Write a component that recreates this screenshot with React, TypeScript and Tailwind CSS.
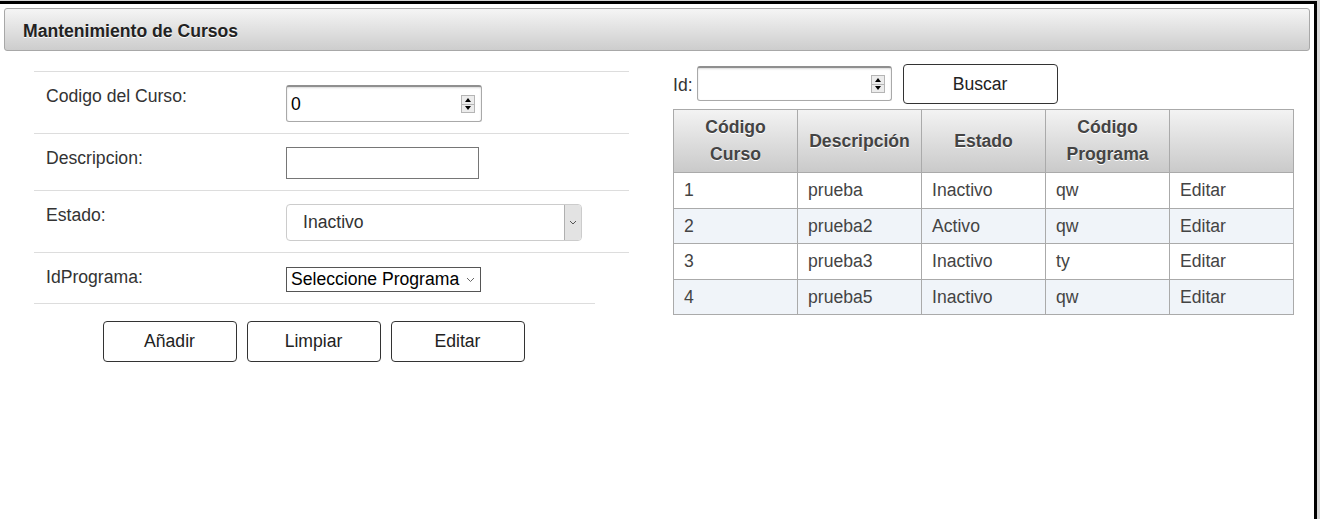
import React from "react";

const rows = [
  { id: "1", desc: "prueba", estado: "Inactivo", prog: "qw" },
  { id: "2", desc: "prueba2", estado: "Activo", prog: "qw" },
  { id: "3", desc: "prueba3", estado: "Inactivo", prog: "ty" },
  { id: "4", desc: "prueba5", estado: "Inactivo", prog: "qw" },
];

function Spinner() {
  return (
    <div className="flex flex-col w-[14px] h-[18px] border border-[#b5b5b5] bg-[#ececec]">
      <div className="flex-1 flex items-center justify-center border-b border-[#b5b5b5]">
        <div className="w-0 h-0 border-l-[3px] border-r-[3px] border-b-[4px] border-l-transparent border-r-transparent border-b-black" />
      </div>
      <div className="flex-1 flex items-center justify-center">
        <div className="w-0 h-0 border-l-[3px] border-r-[3px] border-t-[4px] border-l-transparent border-r-transparent border-t-black" />
      </div>
    </div>
  );
}

function NumberBox({ value, className }: { value: string; className: string }) {
  return (
    <div
      className={`flex items-center justify-between border border-[#a9a9a9] border-t-2 border-t-[#8f8f8f] rounded-[3px] bg-white shadow-[inset_0_1px_2px_rgba(0,0,0,0.15)] pl-1 pr-[6px] ${className}`}
    >
      <span className="text-[17.6px] text-black">{value}</span>
      <Spinner />
    </div>
  );
}

function FormRow({ label, children, padTop }: { label: string; children: React.ReactNode; padTop: string }) {
  return (
    <div className="flex border-t border-[#dddddd]">
      <div className="w-[252px] pl-3 pt-3">
        <span className="leading-6 text-[17.6px] text-[#333]">{label}</span>
      </div>
      <div className={`flex-1 pb-[11px] ${padTop}`}>{children}</div>
    </div>
  );
}

export default function App() {
  return (
    <div className="min-h-[519px] bg-[#d6d6d6] pt-px font-['Liberation_Sans',Arial,sans-serif]">
      <div className="w-[1317px] h-[518px] bg-white border-t-[3px] border-r-[3px] border-black px-1 pt-1">
        <div className="h-[43px] flex items-center pl-[18px] pt-[3px] border border-[#a8a8a8] rounded-[3px] bg-gradient-to-b from-[#f5f5f5] to-[#cdcdcd]">
          <h1 className="text-[17.6px] font-bold text-[#222] [text-shadow:0_1px_0_#fff]">
            Mantenimiento de Cursos
          </h1>
        </div>

        <div className="flex">
          {/* formulario */}
          <div className="ml-[30px] mt-[20px] w-[595px]">
            <FormRow label="Codigo del Curso:" padTop="pt-[13px]">
              <NumberBox value="0" className="w-[196px] h-[37px]" />
            </FormRow>
            <FormRow label="Descripcion:" padTop="pt-[13px]">
              <div className="w-[193px] h-[32px] border border-[#767676] bg-white" />
            </FormRow>
            <FormRow label="Estado:" padTop="pt-[13px]">
              <div className="w-[296px] h-[37px] flex items-stretch border border-[#cccccc] rounded-[4px] bg-white overflow-hidden">
                <span className="flex-1 flex items-center pl-4 text-[17.6px] text-[#333]">Inactivo</span>
                <div className="w-[17px] flex items-center justify-center bg-[#e3e3e3] border-l border-[#b0b0b0]">
                  <svg width="8" height="5" viewBox="0 0 8 5">
                    <path d="M1 1l3 3 3-3" fill="none" stroke="#555" strokeWidth="1" />
                  </svg>
                </div>
              </div>
            </FormRow>
            <FormRow label="IdPrograma:" padTop="pt-[14px]">
              <div className="w-[195px] h-[25px] flex items-center justify-between border border-[#555] bg-white pl-1 pr-[5px]">
                <span className="text-[17.6px] leading-none text-black">Seleccione Programa</span>
                <svg width="9" height="6" viewBox="0 0 9 6">
                  <path d="M1 1l3.5 3.5L8 1" fill="none" stroke="#666" strokeWidth="1" />
                </svg>
              </div>
            </FormRow>
            <div className="w-[561px] border-t border-[#dddddd]" />
            <div className="w-[561px] flex justify-center gap-[10px] mt-[17px] -ml-px">
              {["Añadir", "Limpiar", "Editar"].map((b) => (
                <button
                  key={b}
                  className="w-[134px] h-[41px] border border-[#333] rounded-[4px] bg-white text-[17.6px] text-[#222]"
                >
                  {b}
                </button>
              ))}
            </div>
          </div>

          {/* busqueda y tabla */}
          <div className="ml-[44px] mt-[13px] w-[621px]">
            <div className="flex items-start h-[40px]">
              <span className="text-[17.6px] text-[#333] mr-[4px] mt-[8px]">Id:</span>
              <NumberBox value="" className="w-[195px] h-[35px] mt-[2px]" />
              <button className="ml-[11px] w-[155px] h-[40px] border border-[#333] rounded-[4px] bg-white text-[17.6px] text-[#222]">
                Buscar
              </button>
            </div>
            <table className="mt-[5px] w-[621px] border-collapse table-fixed text-[17.6px]">
              <thead>
                <tr className="h-[63px] bg-gradient-to-b from-[#f3f3f3] to-[#c9c9c9]">
                  {["Código Curso", "Descripción", "Estado", "Código Programa", ""].map((h, i) => (
                    <th
                      key={i}
                      className="w-[124px] border border-[#aaaaaa] px-2 font-bold text-[#444] leading-[27px] [text-shadow:0_1px_0_#fff]"
                    >
                      {h}
                    </th>
                  ))}
                </tr>
              </thead>
              <tbody>
                {rows.map((r, i) => (
                  <tr key={r.id} className={`h-[35.5px] ${i % 2 ? "bg-[#f0f4f9]" : "bg-white"}`}>
                    {[r.id, r.desc, r.estado, r.prog, "Editar"].map((c, j) => (
                      <td key={j} className="border border-[#aaaaaa] pl-[10px] text-[#444]">
                        {c}
                      </td>
                    ))}
                  </tr>
                ))}
              </tbody>
            </table>
          </div>
        </div>
      </div>
    </div>
  );
}
